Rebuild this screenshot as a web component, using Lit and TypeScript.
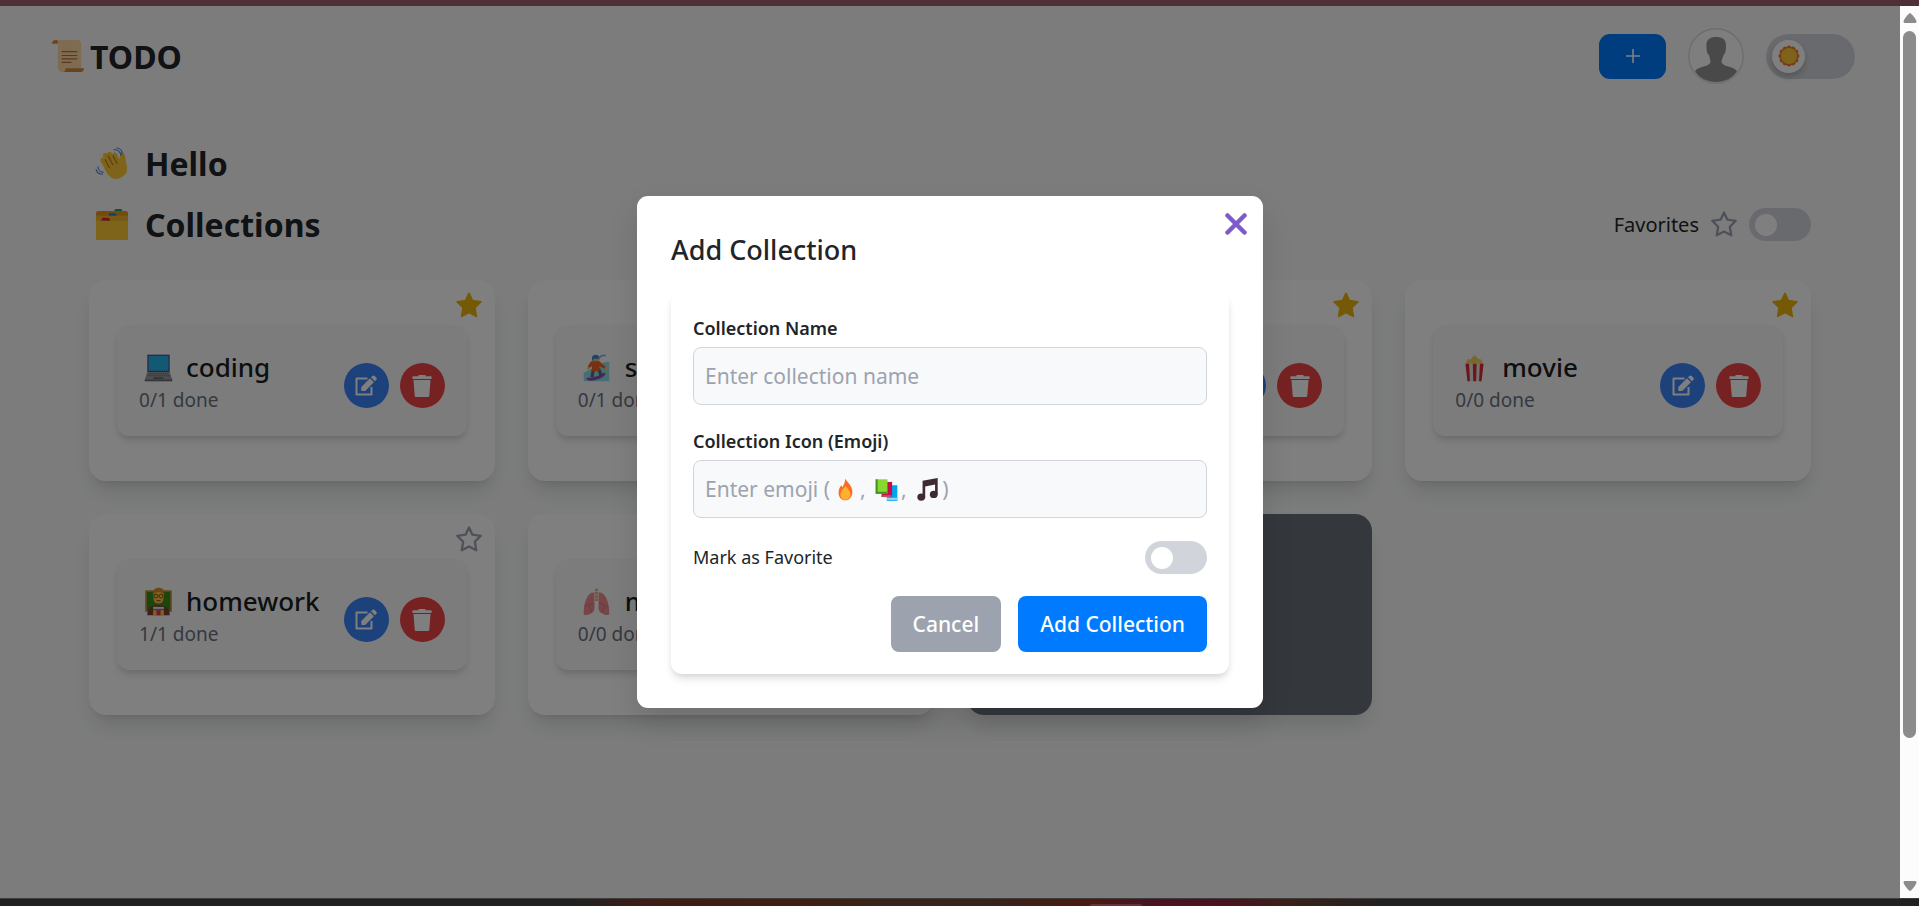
import { LitElement, html, css, svg, nothing, TemplateResult } from "lit";
import { customElement, property, state } from "lit/decorators.js";

type Collection = { icon: string; name: string; done: number; total: number; favorite: boolean };

const art: Record<string, TemplateResult> = {
  scroll: svg`
    <path d="M1 5 C1 2 3 1 5 1 L9 1 L9 5 Z" fill="#d6853d"/>
    <path d="M6 1 H27 C30 1 31 3 31 5 V30 L14 34 H12 C9 34 7 32 7 29 V4 C7 2 6.500 1.500 6 1 Z" fill="#ffd9a0"/>
    <path d="M15 30 H34 C34 33 32 34 30 34 H12 C14 34 15 32 15 30 Z" fill="#d6853d"/>
    <path d="M11 13 H27 M11 17 H27 M11 20.500 H27 M11 24 H21" stroke="#b3703c" stroke-width="1.200"/>`,
  wave: svg`
    <g transform="rotate(-28 20 20)" fill="#fcc934">
      <rect x="10" y="6" width="5" height="20" rx="2.500"/><rect x="14.500" y="3" width="5" height="20" rx="2.500"/>
      <rect x="19" y="4" width="5" height="20" rx="2.500"/><rect x="23.500" y="7" width="4.600" height="18" rx="2.300"/>
      <path d="M10 17 H27 L31 12 C33 10 36 12 35 14.500 C33 20 32 25 30 29 C27 35 13 35 11 27 Z"/>
      <path d="M14.800 9 V19 M19.300 7 V18 M23.800 9 V19" stroke="#b8771d" stroke-width="1.200" fill="none"/>
    </g>
    <path d="M19 3 C23 2 26 5 27 9 M22 1 C26 1 28 4 28 7 M3 20 C3 24 6 26 9 26 M1 23 C2 27 5 28 8 28" stroke="#4f7ddb" stroke-width="1.200" fill="none"/>`,
  folder: svg`
    <path d="M20 3 C20 1 21 1 22 1 H26 C28 1 28 2 28 4 Z" fill="#10a55a"/>
    <rect x="1" y="3" width="33" height="14" rx="2.500" fill="#e8951f"/>
    <path d="M14 8 C14 6 15 5.500 16 5.500 H20 C22 5.500 22 6.500 22.500 8 Z" fill="#0f84d0"/>
    <path d="M1 8 H34 V30 C34 32 33 33 31 33 H4 C2 33 1 32 1 30 Z" fill="#eeb32b"/>
    <path d="M1 13 H34 V30 C34 32 33 33 31 33 H4 C2 33 1 32 1 30 Z" fill="#fcc934"/>
    <path d="M6.500 13 C7 10 8 10 9 10 H13 C15 10 15 11 15.500 13 Z" fill="#d6283f"/>`,
  sun: svg`
    <g fill="#f0772b">${[0, 30, 60, 90, 120, 150, 180, 210, 240, 270, 300, 330].map(
      (a) => svg`<circle cx="17.500" cy="4.500" r="3.600" transform="rotate(${a} 17.500 17.500)"/>`
    )}<circle cx="17.500" cy="17.500" r="14.500"/></g><circle cx="17.500" cy="17.500" r="12.800" fill="#fcc934"/>`,
  laptop: svg`
    <rect x="4" y="2" width="27" height="21" fill="#5a4a86"/><rect x="5.500" y="3.500" width="24" height="18" fill="#25b4e8"/>
    <path d="M4 23 H31 L34 32 V34 H1 V32 Z" fill="#9c9ca2"/><path d="M1 32 H34 V34 H1 Z" fill="#6c6c72"/>
    <path d="M5 25 H30 M4 27.500 H31" stroke="#66666c" stroke-width="1.300" stroke-dasharray="1.500 1"/>
    <rect x="11.500" y="29.300" width="12" height="2" fill="#66666c"/>`,
  snowboard: svg`
    <path d="M2 24 L9 20 L28 11 H33 V34 H2 Z" fill="#8fdfe6"/>
    <path d="M6 30 C12 30 22 27 26 24 C29 22 29 27 25 29 C19 33 10 34 7 33 C5 32 5 30 6 30 Z" fill="#8c4fb8"/>
    <path d="M14 19 L12 29 M20 19 L23 27" stroke="#5a6b7c" stroke-width="4" fill="none"/>
    <path d="M11 10 H21 L29 17 L27 19 L21 16 L21 22 H12 L12 16 L9 18 L7 16 Z" fill="#e8642b"/>
    <circle cx="16.500" cy="6.500" r="4.500" fill="#3b84d9"/><rect x="13.500" y="7" width="7" height="3" fill="#f2c14a"/>
    <path d="M20 6 L24 3 H29" stroke="#67b7e6" stroke-width="2" fill="none"/><circle cx="7.500" cy="18.500" r="1.500" fill="#fcc934"/>
    <circle cx="29" cy="18" r="1.500" fill="#fcc934"/>`,
  popcorn: svg`
    <path d="M7 13 L9 7 L13 8 L17 2 L22 7 L26 8 L28 13 Z" fill="#f3cf5b"/>
    <path d="M7 13 H28 L25.500 34 H9.500 Z" fill="#e6e6e8"/>
    <path d="M6.500 13 H11 L12 34 H9 Z M15.500 13 H20 L19.500 34 H16 Z M24 13 H28.500 L26 34 H23 Z" fill="#dc2a35"/>`,
  teacher: svg`
    <rect x="1.500" y="4" width="32" height="26" fill="#c08b3c"/><rect x="3.500" y="6" width="28" height="22" fill="#3a8c1e"/>
    <path d="M4 34 C4 24 9 22 17.500 22 C26 22 31 24 31 34 Z" fill="#7a4232"/>
    <path d="M11 12 C9 3 14 1 17.500 1 C22 1 26 3 24 12 Z" fill="#d98e28"/>
    <rect x="11.500" y="6" width="12" height="14" rx="5.500" fill="#fcc934"/>
    <circle cx="14.500" cy="11" r="2.300" fill="none" stroke="#6b3b28"/><circle cx="20.500" cy="11" r="2.300" fill="none" stroke="#6b3b28"/>
    <path d="M15 16.500 H20" stroke="#c8374a" stroke-width="1.500"/>
    <rect x="11" y="24" width="13" height="3.500" fill="#d9e3f0"/><path d="M11 27 H24" stroke="#3f66a8"/>
    <rect x="11" y="28" width="13" height="6" fill="#fcc934"/><rect x="15" y="28" width="5" height="6" fill="#e02f75"/>`,
  lungs: svg`
    <path d="M15 7 C9 5 2 15 2 32 C2 35 8 34 12 31 C16 29 15 24 15 20 Z M20 7 C26 5 33 15 33 32 C33 35 27 34 23 31 C19 29 20 24 20 20 Z" fill="#ee8b90"/>
    <path d="M3 23 L14 20 M12 31 L8 22 M32 24 L21 19 M24 31 L27 24" stroke="#d46f78" stroke-width="1" fill="none"/>
    <path d="M17.500 2 V17" stroke="#e8b06a" stroke-width="3.500" stroke-dasharray="3 1"/>`,
  fire: svg`
    <path d="M17 1 C20 6 28 12 28 21 C28 29 23 34 17.500 34 C11 34 7 29 7 22 C7 17 9 14 11 11 L13 14 C15 10 17 6 17 1 Z" fill="#ff6a22"/>
    <path d="M17.500 12 C20 15 25 19 25 25 C25 30 21 33 17.500 33 C13 33 10 30 10 25 C10 19 15 16 17.500 12 Z" fill="#ffb02e"/>`,
  books: svg`
    <path d="M18 11 H34 V35 H18 Z" fill="#00a6ed"/><path d="M18 30 H34 V34 H18 Z" fill="#8fd0ee"/>
    <path d="M10 6 H26 V29 H10 Z" fill="#ca0b4a"/><path d="M10 26 H25 V29 H10 Z" fill="#b05575"/>
    <path d="M1 2 H19 V24 H1 Z" fill="#86d72f"/><path d="M1 2 H4 V24 H1 Z" fill="#44911b"/><path d="M2 21 H19 V24 H2 Z" fill="#44911b"/>`,
  music: svg`
    <path d="M10 4 L33 0 V25 H29 V10 L14 13 V30 H10 Z" fill="#402a32"/>
    <ellipse cx="8" cy="29" rx="6" ry="5.500" fill="#402a32"/><ellipse cx="27" cy="25" rx="6" ry="5.500" fill="#402a32"/>`,
};

const picture = (name: string, cls: string) =>
  html`<span class="picture ${cls}"><svg viewBox="0 0 35 35" aria-hidden="true">${art[name]}</svg></span>`;

const star = (filled: boolean) => html`<svg class="star ${filled ? "on" : ""}" viewBox="0 0 28 28" aria-hidden="true">
  <path d="M14 2.500 L17.400 9.700 L25.800 10.800 L19.800 16.700 L21.300 25.300 L14 21.400 L6.700 25.300 L8.200 16.700 L2.200 10.800 L10.600 9.700 Z"/></svg>`;

const starStyles = css`
  .star { display: block; width: 28px; height: 28px; fill: none; stroke: #9ca3af; stroke-width: 2.300; stroke-linejoin: round; }
  .star.on { fill: #eab308; stroke: #eab308; stroke-width: 1.800; }
  .picture { display: inline-flex; align-items: center; justify-content: center; flex: none; }
`;

@customElement("collection-card")
export class CollectionCard extends LitElement {
  static styles = [
    starStyles,
    css`
      :host {
        display: flex; align-items: center; position: relative; min-height: 201px; padding: 28px;
        box-sizing: border-box; border-radius: 17px; background: #fff;
        box-shadow: 0 14px 21px -4px rgba(0, 0, 0, 0.12), 0 6px 8px -6px rgba(0, 0, 0, 0.12);
      }
      .favorite { position: absolute; top: 11px; right: 12px; padding: 0; border: 0; background: none; cursor: pointer; }
      .body {
        flex: 1; min-width: 0; display: flex; align-items: center; justify-content: space-between;
        padding: 22px; border-radius: 12px; background: #f8f9fa;
        box-shadow: 0 6px 8px -1px rgba(0, 0, 0, 0.1), 0 3px 6px -2px rgba(0, 0, 0, 0.1);
      }
      .title { display: flex; align-items: center; gap: 9px; margin: 0; font-size: 26px; line-height: 40px; font-weight: 500; color: #1a1d20; }
      .emoji { width: 38px; }
      .emoji svg { width: 29px; height: 29px; }
      .count { margin: 0; font-size: 19px; line-height: 27px; color: #6b7280; }
      .actions { display: flex; gap: 11px; padding-top: 10px; }
      .round { display: grid; place-items: center; width: 45px; height: 45px; padding: 0; border: 0; border-radius: 50%; color: #fff; cursor: pointer; }
      .round svg { width: 22px; height: 22px; }
      .edit { background: #3b82f6; }
      .delete { background: #ef4444; }
    `,
  ];

  @property({ attribute: false }) item!: Collection;

  render() {
    const { icon, name, done, total, favorite } = this.item;
    return html`
      <button class="favorite" aria-label="Toggle favorite">${star(favorite)}</button>
      <div class="body">
        <div>
          <h3 class="title">${picture(icon, "emoji")}${name}</h3>
          <p class="count">${done}/${total} done</p>
        </div>
        <div class="actions">
          <button class="round edit" aria-label="Edit">
            <svg viewBox="0 0 22 22" fill="currentColor">
              <path d="M12.500 3.500 H1.500 V19.500 H16.500 V12" fill="none" stroke="currentColor" stroke-width="2" stroke-linejoin="round"/>
              <path d="M6.300 16 V12 L15 3.300 L18.900 7.200 L10.200 16 Z M16 2.300 L17.300 1 C18 .3 19 .3 19.700 1 L21.200 2.500 C22 3.300 22 4.200 21.200 5 L19.900 6.200 Z"/>
            </svg>
          </button>
          <button class="round delete" aria-label="Delete">
            <svg viewBox="0 0 22 22" fill="currentColor">
              <path d="M7.500 0 H14.500 V1.300 H20 C21 1.300 21 4 20 4 H2 C1 4 1 1.300 2 1.300 H7.500 Z M2.500 5 H19.500 L18.300 20.500 C18.200 21.600 17.700 22 16.800 22 H5.200 C4.300 22 3.800 21.600 3.700 20.500 Z"/>
            </svg>
          </button>
        </div>
      </div>`;
  }
}

@customElement("app-root")
export class AppRoot extends LitElement {
  static styles = [
    starStyles,
    css`
      :host { display: flex; flex-direction: column; height: 100vh; font-family: "Noto Sans", "Open Sans", sans-serif; font-size: 21px; color: #212529; }
      button, input { font: inherit; }
      .top-edge { flex: none; height: 6px; background: #4f3034; }
      .bottom-edge {
        flex: none; display: flex; align-items: flex-end; height: 8px; box-sizing: border-box; border-top: 1px solid #403c3b;
        background: linear-gradient(90deg, #212121 30%, #401c16 34%, #401d17 41%, #38251a 46%, #38231a 52%, #4c1812 57%, #481422 60%, #48131f 64%, #3b2019 67%, #212121 72%);
      }
      .bump { width: 52px; height: 2px; margin-left: 56.800%; border-radius: 2px 2px 0 0; background: #60343a; }
      .window { flex: 1; min-height: 0; display: flex; }
      .page { flex: 1; min-width: 0; position: relative; overflow: hidden; background: #f8f9fa; }

      .scrollbar { flex: none; width: 19px; display: flex; flex-direction: column; align-items: center; justify-content: space-between; padding: 7px 0; box-sizing: border-box; background: #fcfcfc; }
      .scrollbar svg { width: 14px; height: 10px; fill: #8b8b8b; flex: none; }
      .track { flex: 1; width: 13px; padding: 8px 0; }
      .thumb { height: 84%; border-radius: 7px; background: #8b8b8b; }

      header { display: flex; align-items: center; justify-content: space-between; padding: 22px 45px; }
      .brand { display: flex; align-items: center; margin: 0; font-size: 32px; line-height: 45px; font-weight: 700; }
      .heading-icon { width: 45px; }
      .heading-icon svg { width: 34px; height: 34px; }
      .tools { display: flex; align-items: center; gap: 22px; }
      .new { display: grid; place-items: center; width: 67px; height: 45px; padding: 0; border: 0; border-radius: 11px; background: #007bff; cursor: pointer; }
      .new svg { width: 16px; height: 16px; stroke: #fff; stroke-width: 1.600; }
      .avatar { display: block; width: 56px; height: 56px; }

      .switch { appearance: none; display: block; flex: none; width: 62px; height: 33px; margin: 0; padding: 6px; box-sizing: border-box; border-radius: 17px; background: #d1d5db; cursor: pointer; }
      .switch::before { content: ""; display: block; width: 22px; height: 22px; border-radius: 50%; background: #fff; }
      .switch:checked::before { margin-left: auto; }
      .theme { position: relative; display: block; }
      .theme .switch { width: 89px; height: 45px; border-radius: 23px; }
      .theme .switch::before { width: 33px; height: 33px; box-shadow: 0 4px 7px rgba(0, 0, 0, 0.2); }
      .theme-icon { position: absolute; left: 6px; top: 6px; width: 33px; height: 33px; pointer-events: none; }
      .theme-icon svg { width: 22px; height: 22px; }

      main { padding: 38px 89px; }
      .line { display: flex; align-items: center; justify-content: space-between; height: 40px; }
      .line + .line { margin: 21px 0 35px; }
      .heading { display: flex; align-items: center; gap: 11px; margin: 0; font-size: 32px; line-height: 40px; font-weight: 700; }
      .filter { display: flex; align-items: center; gap: 11px; padding-bottom: 2px; font-size: 20px; }
      .grid { display: grid; grid-template-columns: repeat(4, minmax(0, 1fr)); gap: 33px; }
      .create { border: 0; border-radius: 17px; background: #69717a; color: #fff; box-shadow: 0 14px 21px -4px rgba(0, 0, 0, 0.12); }

      .backdrop { position: absolute; inset: 0; display: grid; place-items: center; background: rgba(0, 0, 0, 0.5); }
      .dialog { position: relative; width: 100%; max-width: 626px; padding: 34px; box-sizing: border-box; border-radius: 11px; background: #fff; box-shadow: 0 14px 30px rgba(0, 0, 0, 0.12); }
      .close { position: absolute; top: 17px; right: 16px; display: block; padding: 0; border: 0; background: none; cursor: pointer; }
      .close svg { display: block; width: 22px; height: 22px; stroke: #7e5bcb; stroke-width: 4.500; stroke-linecap: round; }
      .dialog-title { margin: 0 0 22px; font-size: 27px; line-height: 40px; font-weight: 500; }
      .form { display: grid; gap: 22px; padding: 22px; border-radius: 11px; background: #fff; box-shadow: 0 6px 8px -1px rgba(0, 0, 0, 0.1), 0 3px 6px -2px rgba(0, 0, 0, 0.1); }
      .field { display: grid; gap: 5px; position: relative; }
      .label { font-size: 18px; line-height: 28px; font-weight: 600; }
      .input { width: 100%; height: 58px; padding: 0 11px; box-sizing: border-box; border: 1px solid #d1d5db; border-radius: 8px; background: #f8f9fb; color: inherit; outline: none; }
      .input::placeholder { color: #9ca3af; opacity: 1; }
      .hint { position: absolute; left: 12px; bottom: 0; display: flex; align-items: center; height: 58px; color: #9ca3af; white-space: pre; pointer-events: none; }
      .hint-icon { width: 30px; }
      .hint-icon svg { width: 23px; height: 23px; }
      .row { display: flex; align-items: center; justify-content: space-between; height: 34px; font-size: 18px; }
      .buttons { display: flex; justify-content: flex-end; gap: 17px; }
      .button { height: 56px; padding: 0 22px; border: 0; border-radius: 8px; color: #fff; font-weight: 500; cursor: pointer; }
      .cancel { background: #9ca3af; }
      .submit { background: #007bff; }
    `,
  ];

  @state() private emoji = "";
  @state() private open = true;

  private items: Collection[] = [
    { icon: "laptop", name: "coding", done: 0, total: 1, favorite: true },
    { icon: "snowboard", name: "sport", done: 0, total: 1, favorite: true },
    { icon: "music", name: "music", done: 0, total: 0, favorite: true },
    { icon: "popcorn", name: "movie", done: 0, total: 0, favorite: true },
    { icon: "teacher", name: "homework", done: 1, total: 1, favorite: false },
    { icon: "lungs", name: "medical", done: 0, total: 0, favorite: false },
  ];

  private renderDialog() {
    const close = () => (this.open = false);
    return html`
      <div class="backdrop">
        <section class="dialog" role="dialog" aria-modal="true" aria-labelledby="dialog-title">
          <button class="close" aria-label="Close" @click=${close}>
            <svg viewBox="0 0 22 22"><path d="M2.500 2.500 L19.500 19.500 M19.500 2.500 L2.500 19.500"/></svg>
          </button>
          <h2 class="dialog-title" id="dialog-title">Add Collection</h2>
          <form class="form" @submit=${(e: Event) => e.preventDefault()}>
            <div class="field">
              <label class="label" for="name">Collection Name</label>
              <input class="input" id="name" type="text" placeholder="Enter collection name" />
            </div>
            <div class="field">
              <label class="label" for="emoji">Collection Icon (Emoji)</label>
              <input class="input" id="emoji" type="text" @input=${(e: Event) => (this.emoji = (e.target as HTMLInputElement).value)} />
              ${this.emoji
                ? nothing
                : html`<span class="hint" aria-hidden="true">Enter emoji (${picture("fire", "hint-icon")}, ${picture("books", "hint-icon")}, ${picture("music", "hint-icon")})</span>`}
            </div>
            <div class="row">
              <label for="mark">Mark as Favorite</label>
              <input class="switch" id="mark" type="checkbox" />
            </div>
            <div class="buttons">
              <button class="button cancel" type="button" @click=${close}>Cancel</button>
              <button class="button submit" type="submit">Add Collection</button>
            </div>
          </form>
        </section>
      </div>`;
  }

  render() {
    return html`
      <div class="top-edge"></div>
      <div class="window">
        <div class="page">
          <header>
            <h1 class="brand">${picture("scroll", "heading-icon")}TODO</h1>
            <div class="tools">
              <button class="new" aria-label="New collection"><svg viewBox="0 0 16 16"><path d="M8 1 V15 M1 8 H15"/></svg></button>
              <svg class="avatar" viewBox="0 0 56 56" role="img" aria-label="Profile">
                <circle cx="28" cy="28" r="27.200" fill="#fdfdfd" stroke="#d9dbde" stroke-width="1.400"/>
                <path d="M28 9 C34 9 38.500 11 38 19 C38 23 37 26 35.500 27 C35 30 33.500 31 33.500 34 C34 39 46 38 49 43 C45 50 37 54 28 54 C19 54 11 50 7 43 C10 38 22 39 22.500 34 C22.500 31 21.500 30 21 27 C19 26 18.500 23 18.500 19 C17.500 11 23 9 28 9 Z" fill="#929292"/>
              </svg>
              <label class="theme"><input class="switch" type="checkbox" aria-label="Dark theme" />${picture("sun", "theme-icon")}</label>
            </div>
          </header>
          <main>
            <div class="line"><h2 class="heading">${picture("wave", "heading-icon")}Hello</h2></div>
            <div class="line">
              <h2 class="heading">${picture("folder", "heading-icon")}Collections</h2>
              <label class="filter">Favorites ${star(false)}<input class="switch" type="checkbox" /></label>
            </div>
            <div class="grid">
              ${this.items.map((item) => html`<collection-card .item=${item}></collection-card>`)}
              <button class="create" aria-label="Add a collection"></button>
            </div>
          </main>
          ${this.open ? this.renderDialog() : nothing}
        </div>
        <div class="scrollbar" aria-hidden="true">
          <svg viewBox="0 0 14 10"><path d="M7 0 C8 0 14 7 13.500 9 Q13.200 10 12 10 H2 Q.8 10 .5 9 C0 7 6 0 7 0 Z"/></svg>
          <div class="track"><div class="thumb"></div></div>
          <svg viewBox="0 0 14 10"><path d="M7 10 C8 10 14 3 13.500 1 Q13.200 0 12 0 H2 Q.8 0 .5 1 C0 3 6 10 7 10 Z"/></svg>
        </div>
      </div>
      <div class="bottom-edge"><div class="bump"></div></div>`;
  }
}
